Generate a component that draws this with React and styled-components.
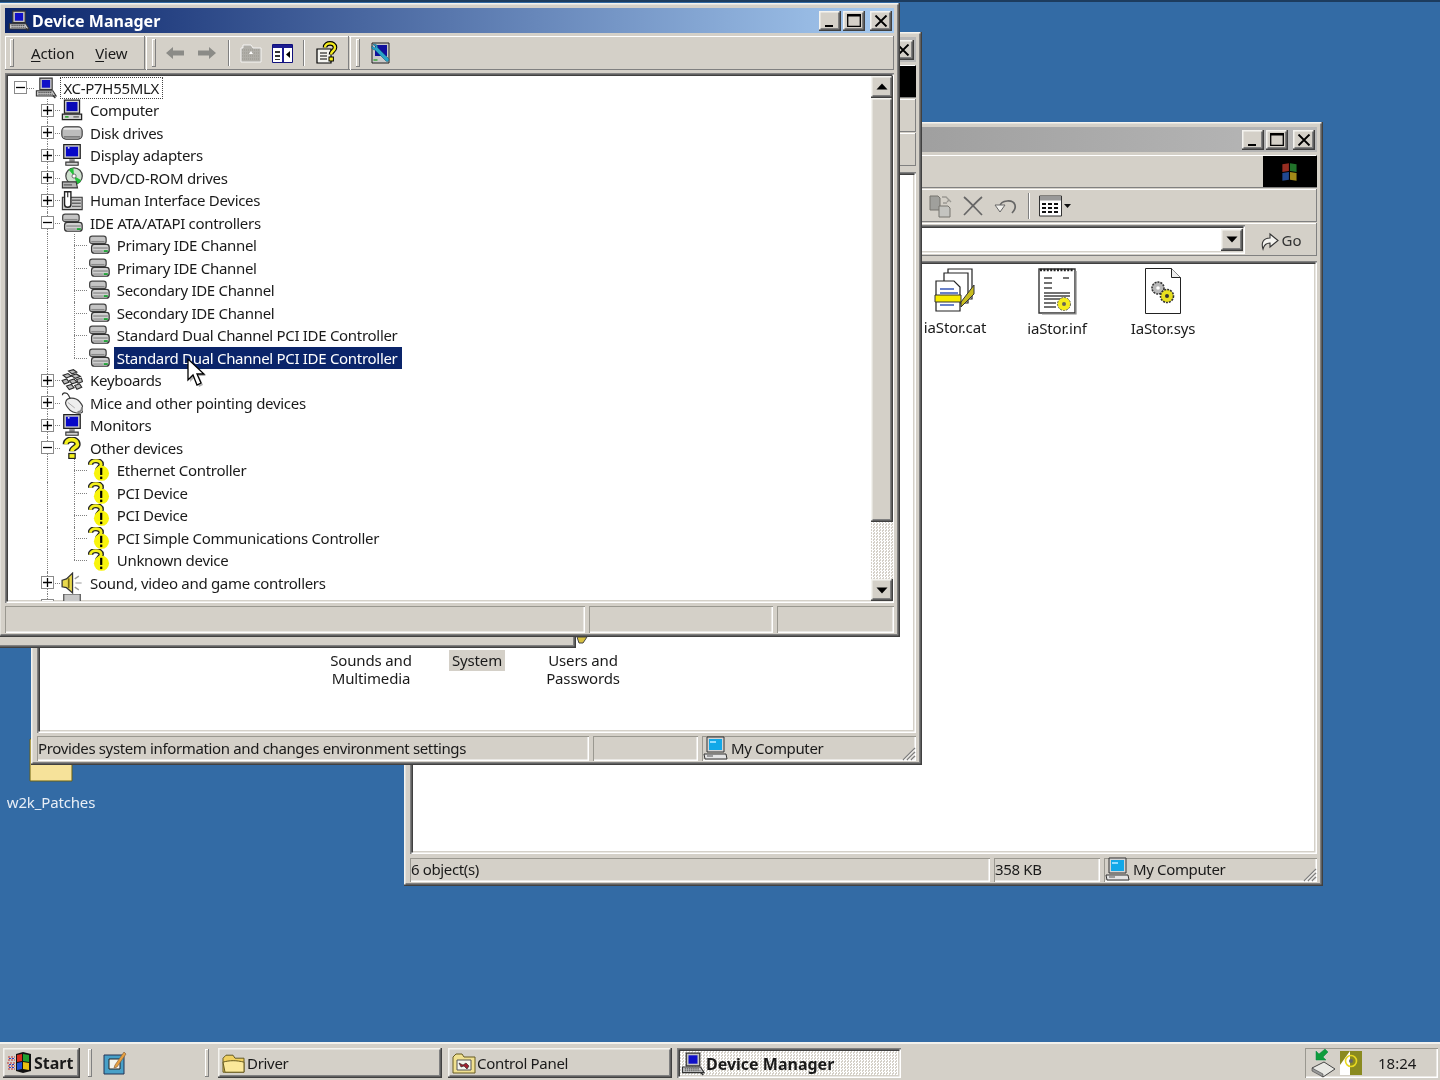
import React from "react";
import styled, { createGlobalStyle, css } from "styled-components";

const Global = createGlobalStyle`
  html, body { margin: 0; padding: 0; background: #336ba5; }
  * { box-sizing: border-box; }
`;

const FACE = "#d4d0c8";

const raised = css`
  box-shadow: inset -1.5px -1.5px #404040, inset 1.5px 1.5px #f4f3ef,
    inset -3px -3px #808080;
`;
const thinRaised = css`
  box-shadow: inset -1px -1px #808080, inset 1px 1px #fff;
`;
const sunken = css`
  box-shadow: inset 1.5px 1.5px #808080, inset -1.5px -1.5px #fff,
    inset 3px 3px #404040, inset -3px -3px ${FACE};
`;
const thinSunken = css`
  box-shadow: inset 1px 1px #9a9890, inset -1.5px -1.5px #fff;
`;

const Screen = styled.div`
  position: relative;
  width: 1440px;
  height: 1080px;
  overflow: hidden;
  background: #336ba5;
  display: flex;
  flex-direction: column;
  justify-content: flex-end;
  font-family: "Noto Sans", "Liberation Sans", sans-serif;
  font-size: 15px;
  color: #1a1a1a;
  filter: blur(0.4px);
`;

const TopEdge = styled.div`
  position: absolute;
  left: 0;
  right: 0;
  top: 0;
  height: 2px;
  background: #1d3c5e;
`;

const Win = styled.div`
  position: absolute;
  left: ${(p) => p.$x}px;
  top: ${(p) => p.$y}px;
  width: ${(p) => p.$w}px;
  height: ${(p) => p.$h}px;
  padding: 5px 6px 4px 6px;
  background: ${FACE};
  display: flex;
  flex-direction: column;
  overflow: hidden;
  ${raised}
`;

const TitleBar = styled.div`
  height: 25px;
  flex: none;
  padding: 0 2px 0 3px;
  display: flex;
  align-items: center;
  gap: 2px;
  color: #fff;
  font-weight: 700;
  font-size: 16px;
  background: ${(p) =>
    p.$active
      ? "linear-gradient(90deg, #0a246a 0%, #a6caf0 100%)"
      : "linear-gradient(90deg, #808080 0%, #b8b8b8 100%)"};
`;

const TitleText = styled.span`
  flex: 1;
`;

const CapButton = styled.div`
  width: 22px;
  height: 20px;
  flex: none;
  margin-left: ${(p) => p.$gap || 0}px;
  background: ${FACE};
  display: flex;
  align-items: center;
  justify-content: center;
  ${raised}
`;

const Band = styled.div`
  flex: none;
  height: ${(p) => p.$h || 34}px;
  margin-top: ${(p) => p.$top ?? 3}px;
  display: flex;
  align-items: center;
  padding: ${(p) => p.$pad || "0 0 0 4px"};
  ${thinRaised}
`;

const Gripper = styled.div`
  width: 4px;
  height: 28px;
  flex: none;
  margin-left: ${(p) => p.$ml || 0}px;
  ${thinRaised}
`;

const BandEdge = styled.div`
  width: 3px;
  align-self: stretch;
  flex: none;
  margin-left: ${(p) => p.$ml || 0}px;
  box-shadow: inset 1px 0 #808080, inset -1px 0 #fff;
`;

const ToolSep = styled.div`
  width: 2px;
  height: 26px;
  flex: none;
  margin-left: ${(p) => p.$ml || 0}px;
  box-shadow: inset 1px 0 #808080, inset -1px 0 #fff;
`;

const MenuItem = styled.span`
  margin-left: ${(p) => p.$ml || 0}px;
  flex: none;
  letter-spacing: -0.2px;
  & u {
    text-underline-offset: 2px;
  }
`;

const ToolIcon = styled.span`
  flex: none;
  display: flex;
  align-items: center;
  margin-left: ${(p) => p.$ml || 0}px;
`;

const TreeFrame = styled.div`
  flex: 1;
  min-height: 0;
  margin-top: 3px;
  padding: 3.5px 1px 2px 2px;
  background: #fff;
  display: flex;
  ${sunken}
`;

const TreePane = styled.div`
  flex: 1;
  overflow: hidden;
  letter-spacing: -0.3px;
`;

const Row = styled.div`
  height: 22.5px;
  display: flex;
  align-items: center;
`;

const Gutter = styled.div`
  position: relative;
  width: 26.7px;
  height: 100%;
  flex: none;
  display: flex;
  align-items: center;
  justify-content: center;
  ${(p) =>
    (p.$kind === "pass" || p.$kind === "branch" || p.$kind === "node") &&
    css`
      &::before {
        content: "";
        position: absolute;
        left: 50%;
        top: 0;
        bottom: 0;
        border-left: 1px dotted #808080;
      }
    `}
  ${(p) =>
    p.$kind === "end" &&
    css`
      &::before {
        content: "";
        position: absolute;
        left: 50%;
        top: 0;
        bottom: 50%;
        border-left: 1px dotted #808080;
      }
    `}
  ${(p) =>
    (p.$kind === "branch" || p.$kind === "end" || p.$kind === "node" || p.$kind === "root") &&
    css`
      &::after {
        content: "";
        position: absolute;
        left: 50%;
        right: 0;
        top: 50%;
        border-top: 1px dotted #808080;
      }
    `}
`;

const Expander = styled.span`
  position: relative;
  z-index: 1;
  width: 13px;
  height: 13px;
  border: 1px solid #8a8a8a;
  background: #fff;
  display: flex;
  align-items: center;
  justify-content: center;
`;

const NodeIcon = styled.span`
  width: 26.7px;
  flex: none;
  display: flex;
  padding-left: 1px;
`;

const NodeLabel = styled.span`
  height: 22px;
  line-height: 20px;
  padding: 0 3px 0 2px;
  white-space: nowrap;
  border: 1px ${(p) => (p.$focus ? "dotted #444" : "solid transparent")};
  ${(p) =>
    p.$selected &&
    css`
      background: #0a246a;
      color: #fff;
      border-color: #0a246a;
    `}
`;

const Scrollbar = styled.div`
  width: 22px;
  flex: none;
  margin-top: -1px;
  display: flex;
  flex-direction: column;
  background: repeating-conic-gradient(#fff 0 25%, ${FACE} 0 50%) 0 0 / 3px 3px;
`;

const ScrollButton = styled.div`
  height: 22px;
  flex: none;
  background: ${FACE};
  display: flex;
  align-items: center;
  justify-content: center;
  ${raised}
`;

const ComboButton = styled(ScrollButton)`
  width: 22px;
`;

const ScrollThumb = styled.div`
  height: ${(p) => p.$h}px;
  flex: none;
  background: ${FACE};
  ${raised}
`;

const ScrollTrack = styled.div`
  flex: 1;
`;

const StatusRow = styled.div`
  flex: none;
  height: ${(p) => p.$h || 27}px;
  margin-top: ${(p) => p.$top ?? 3}px;
  display: flex;
  gap: 4px;
`;

const StatusCell = styled.div`
  width: ${(p) => (p.$w ? `${p.$w}px` : "auto")};
  flex: ${(p) => (p.$w ? "none" : "1")};
  display: flex;
  align-items: center;
  gap: 3px;
  padding: 0 0 2px 1px;
  white-space: nowrap;
  letter-spacing: -0.36px;
  ${thinSunken}
`;

const GripBox = styled.span`
  margin: 0 0 -2px auto;
  display: flex;
  align-self: flex-end;
`;

const Brand = styled.div`
  width: 54px;
  height: 31px;
  flex: none;
  margin-left: auto;
  background: #000;
  display: flex;
  align-items: center;
  justify-content: center;
`;

const AddressBox = styled.div`
  flex: 1;
  height: 29px;
  background: #fff;
  display: flex;
  justify-content: flex-end;
  align-items: center;
  padding-right: 2px;
  ${sunken}
`;

const GoBox = styled.div`
  width: 70px;
  flex: none;
  display: flex;
  align-items: center;
  justify-content: center;
  gap: 1px;
  color: #333;
`;

const Content = styled.div`
  flex: 1;
  min-height: 0;
  margin-top: ${(p) => p.$top || 6}px;
  background: #fff;
  display: flex;
  flex-direction: column;
  justify-content: ${(p) => (p.$bottom ? "flex-end" : "flex-start")};
  padding: ${(p) => p.$pad};
  ${sunken}
`;

const IconRow = styled.div`
  display: flex;
`;

const Item = styled.div`
  width: ${(p) => p.$w || 106}px;
  flex: none;
  display: flex;
  flex-direction: column;
  align-items: center;
  text-align: center;
  line-height: 18px;
  letter-spacing: -0.15px;
`;

const Caption = styled.span`
  margin-top: ${(p) => p.$top || 0}px;
  padding: ${(p) => (p.$hilite ? "1px 3px 2px" : "0")};
  background: ${(p) => (p.$hilite ? FACE : "transparent")};
`;

const UsersTip = styled.svg`
  margin-bottom: 6px;
`;

const DesktopIcon = styled.div`
  position: absolute;
  left: 0;
  top: 738px;
  width: 102px;
  display: flex;
  flex-direction: column;
  align-items: center;
  gap: 10px;
  color: #e8eef6;
  letter-spacing: -0.15px;
`;

const Pointer = styled.svg`
  position: absolute;
  left: 186px;
  top: 358px;
  z-index: 5;
`;

const Taskbar = styled.div`
  height: 38px;
  flex: none;
  position: relative;
  background: ${FACE};
  border-top: 2px solid #f2f1ed;
  padding: 4px 2px 2px 3px;
  display: flex;
  align-items: stretch;
`;

const TaskButton = styled.div`
  width: ${(p) => p.$w}px;
  flex: none;
  margin-left: ${(p) => p.$ml || 0}px;
  display: flex;
  align-items: center;
  gap: 1px;
  padding-left: ${(p) => p.$pl ?? 4}px;
  font-weight: ${(p) => (p.$bold ? 700 : 400)};
  font-size: ${(p) => (p.$bold ? "16px" : "15px")};
  letter-spacing: ${(p) => (p.$bold ? "0" : "-0.3px")};
  white-space: nowrap;
  ${raised}
  ${(p) =>
    p.$pressed &&
    css`
      ${sunken}
      background: repeating-conic-gradient(#fff 0 25%, ${FACE} 0 50%) 0 0 / 3px 3px;
      padding-top: 2px;
    `}
`;

const TaskGrip = styled.div`
  width: 4px;
  flex: none;
  margin: 1px 0 1px ${(p) => p.$ml || 0}px;
  ${thinRaised}
`;

const Tray = styled.div`
  width: 133px;
  margin-left: auto;
  flex: none;
  display: flex;
  align-items: center;
  padding: 0 0 0 5px;
  gap: 1px;
  ${thinSunken}
`;

const Clock = styled.span`
  margin-left: 14px;
`;

/* ---- icons ---- */

const Ico = ({ s = 22, children }) => (
  <svg width={s} height={s} viewBox="0 0 16 16">
    {children}
  </svg>
);

const RootPc = ({ s }) => (
  <Ico s={s}>
    <path d="M3.5 .8h9v8.4h-9z" fill="#c4c4c4" stroke="#333" strokeWidth=".8" />
    <path d="M5 2.2h6v5.6H5z" fill="#1010c8" />
    <path d="M1 10h12l2.4 3.8H1z" fill="#c8c8c8" stroke="#333" strokeWidth=".8" />
    <path d="M2.5 11.2h9.5M2.5 12.5h10.5" stroke="#555" strokeWidth=".8" strokeDasharray="1 .4" />
    <path d="M13 13.5l1.8 1.8" stroke="#333" />
  </Ico>
);
const DesktopPc = ({ s }) => (
  <Ico s={s}>
    <path d="M2.5 .8h11v9.4h-11z" fill="#d0d0d0" stroke="#222" strokeWidth=".9" />
    <path d="M4 2.2h8v6.6H4z" fill="#0808b8" />
    <path d="M1 11h14v4H1z" fill="#d0d0d0" stroke="#222" strokeWidth=".9" />
    <path d="M3 13h2.5" stroke="#18a018" />
    <path d="M9 13h4" stroke="#666" />
  </Ico>
);
const DiskIco = () => (
  <Ico>
    <rect x=".6" y="3.5" width="14.8" height="9" rx="3" fill="#bcbcbc" stroke="#333" strokeWidth=".8" />
    <path d="M2 5h12" stroke="#f0f0f0" strokeWidth="1.1" />
    <path d="M2 10.8h12" stroke="#777" strokeWidth="1.1" />
  </Ico>
);
const MonitorIco = () => (
  <Ico>
    <path d="M2 0.5h12v10H2z" fill="#c8c8c8" stroke="#222" strokeWidth=".9" />
    <path d="M3.6 2h8.8v7H3.6z" fill="#0808c8" />
    <path d="M5 2.8h1.2" stroke="#fff" />
    <path d="M6 11h4v2H6z" fill="#888" />
    <path d="M3.5 13.2h9v2.2h-9z" fill="#d0d0d0" stroke="#333" strokeWidth=".8" />
  </Ico>
);
const DvdIco = () => (
  <Ico>
    <circle cx="9.5" cy="6.6" r="6" fill="#cfe0cf" stroke="#444" strokeWidth=".9" />
    <path d="M9.5 6.6L5.6 2A6 6 0 0 1 9 .7zM9.5 6.6l5.2 3a6 6 0 0 1-3.2 2.8z" fill="#22c038" />
    <circle cx="9.5" cy="6.6" r="1.5" fill="#fff" stroke="#555" strokeWidth=".6" />
    <path d="M1 10.8h10l1 4.4H1z" fill="#b4b4b4" stroke="#333" strokeWidth=".8" />
    <path d="M2 13h6" stroke="#666" />
  </Ico>
);
const HidIco = () => (
  <Ico>
    <path d="M1 6h14.4v9H1z" fill="#c8c8c8" stroke="#333" strokeWidth=".8" />
    <path d="M8 8.2h6.4M8 10.4h6.4M8 12.6h6.4" stroke="#666" strokeWidth="1" />
    <path d="M2.6 2h4.6v9a2.3 2.3 0 0 1-4.6 0z" fill="#fff" stroke="#222" strokeWidth="1" />
    <path d="M4.9 2v4" stroke="#222" strokeWidth=".8" />
  </Ico>
);
const IdeIco = () => (
  <Ico>
    <rect x="1.2" y="1.6" width="12" height="5.4" rx="1.8" fill="#c4c4c4" stroke="#444" strokeWidth=".9" />
    <path d="M2.4 5.6h9.6" stroke="#8a8a8a" strokeWidth="1.1" />
    <rect x="2.6" y="7.6" width="12.8" height="6.4" rx="2" fill="#d0d0d0" stroke="#333" strokeWidth=".9" />
    <path d="M3.8 10.2h10.6" stroke="#888" strokeWidth=".9" />
    <path d="M3.8 12.4h7" stroke="#9a9a9a" />
    <path d="M11.4 12.4h3" stroke="#18a030" strokeWidth="1.3" />
  </Ico>
);
const KeyboardIco = () => (
  <Ico>
    <g fill="#bcbcbc" stroke="#2a2a2a" strokeWidth=".8">
      <path d="M5.5 1.5l3.5-1 2.5 1.8-3.5 1.2z" />
      <path d="M1.5 4.5l3.6-1.2 2.4 1.8-3.6 1.4z" />
      <path d="M7.5 4.8l3.6-1.2 3 1.8-3.6 1.4z" />
      <path d="M.8 8.4l3.4-1.2 1.6 2.4-3.4 1.4z" />
      <path d="M6 8.4l3.5-1.2 2 2.4-3.5 1.2z" />
      <path d="M11.4 7.6l3.4-1 .8 2.6-3.2 1.2z" />
      <path d="M4 12.4l3.5-1.2 2 2.4-3.5 1.4z" />
      <path d="M10 12l3.5-1.2 1.6 2.4-3.5 1.6z" />
    </g>
  </Ico>
);
const MouseIco = () => (
  <Ico>
    <path d="M1 2.4c0-2.4 3.5-2.4 4.5 0s1 2 2 3" fill="none" stroke="#333" strokeWidth=".8" />
    <path d="M3.5 7c1-3.4 7-3.4 10 0s3.2 6.4 2 7.6-6.6 1-8.8-1.2S2.6 9.2 3.5 7z" fill="#eee" stroke="#444" strokeWidth=".9" />
    <path d="M12 14.6c2.4 0 3.4-1.4 3.2-3.6" fill="none" stroke="#888" strokeWidth="1.4" />
    <path d="M5 7.6l5 4" stroke="#aaa" strokeWidth=".7" />
  </Ico>
);
const QuestionIco = () => (
  <Ico>
    <path d="M3.5 5.2C3.5 .8 12 .8 12 5.2 12 7.8 8 7.6 8 10.4" fill="none" stroke="#222" strokeWidth="4.6" />
    <path d="M3.5 5.2C3.5 .8 12 .8 12 5.2 12 7.8 8 7.6 8 10.4" fill="none" stroke="#f4f01c" strokeWidth="2.6" />
    <rect x="5.7" y="12" width="4.6" height="3.6" fill="#f4f01c" stroke="#222" strokeWidth=".9" />
  </Ico>
);
const WarnIco = () => (
  <Ico>
    <path d="M1.8 4.2C1.8 .2 9.6 .2 9.6 4 9.6 5.6 7.4 6.4 7 8.4" fill="none" stroke="#222" strokeWidth="4" />
    <path d="M1.8 4.2C1.8 .2 9.6 .2 9.6 4 9.6 5.6 7.4 6.4 7 8.4" fill="none" stroke="#f4f01c" strokeWidth="2.1" />
    <circle cx="9.8" cy="10.4" r="5.5" fill="#f8f40c" />
    <path d="M9.6 6.4v5.2" stroke="#000" strokeWidth="1.6" />
    <path d="M9.6 12.8v1.8" stroke="#000" strokeWidth="1.6" />
  </Ico>
);
const SoundIco = () => (
  <Ico>
    <path d="M.8 6l3.2-1L8.4.8v14.4L4 11.4.8 10.8z" fill="#e8d84c" stroke="#333" strokeWidth=".9" />
    <path d="M5.6 4.6v7" stroke="#7a6a10" strokeWidth="1.2" />
    <path d="M10 5l3-2M10.5 8h4.5M10 11l3 2" stroke="#999" strokeWidth=".9" />
  </Ico>
);
const StorageIco = () => (
  <Ico>
    <path d="M2 0h12v16H2z" fill="#c8c8c8" stroke="#444" strokeWidth=".8" />
  </Ico>
);

const Chevron = ({ up }) => (
  <svg width="12" height="7" viewBox="0 0 12 7">
    <path d={up ? "M6 .5L11.5 6.5H.5z" : "M6 6.5L11.5 .5H.5z"} fill="#000" />
  </svg>
);
const CapMin = () => (
  <svg width="12" height="12" viewBox="0 0 12 12">
    <path d="M1 10h8v2H1z" fill="#000" />
  </svg>
);
const CapMax = () => (
  <svg width="14" height="13" viewBox="0 0 14 13">
    <path d="M.7.7h12.6v11.6H.7z" fill="none" stroke="#000" strokeWidth="1.3" />
    <path d="M0 1.5h14" stroke="#000" strokeWidth="2" />
  </svg>
);
const CapClose = () => (
  <svg width="14" height="12" viewBox="0 0 14 12">
    <path d="M1.5.5l11 11M12.5.5l-11 11" stroke="#000" strokeWidth="1.9" />
  </svg>
);
const SizeGrip = () => (
  <svg width="16" height="16" viewBox="0 0 16 16">
    <path d="M15 3L3 15M15 7l-8 8M15 11l-4 4" stroke="#808080" strokeWidth="1.3" fill="none" />
    <path d="M15 4.5L4.5 15M15 8.5L8.5 15M15 12.5L12.5 15" stroke="#fff" strokeWidth="1" fill="none" />
  </svg>
);

const Arrow = ({ left }) => (
  <svg width="20" height="16" viewBox="0 0 20 16">
    <path d={left ? "M1 8l7-6v3.5h11v5H8V14z" : "M19 8l-7-6v3.5H1v5h11V14z"} fill="#8b8b87" />
  </svg>
);
const FolderUp = () => (
  <svg width="22" height="20" viewBox="0 0 22 20">
    <path d="M1 5h2V2h8l2 3h8v14H1z" fill="#b0aea8" stroke="#fff" strokeWidth=".8" />
    <path d="M2 7h18M2 10h18M2 13h18M2 16h18" stroke="#99978f" strokeDasharray="1 1" />
    <path d="M11 8l-2 3h4z" fill="#fff" />
  </svg>
);
const DetailsIco = () => (
  <svg width="21" height="19" viewBox="0 0 21 19">
    <path d="M.5.5h20v18H.5z" fill="#fff" stroke="#10107c" />
    <path d="M1 1h19v3H1z" fill="#1c1c90" />
    <path d="M10 4h2v14h-2z" fill="#1c1c90" />
    <path d="M3 7h5v2H3zM3 11h5v2H3zM3 15h5v1H3z" fill="#333" />
    <path d="M18 7v7l-4-3.5z" fill="#000" />
  </svg>
);
const HelpIco = () => (
  <svg width="24" height="24" viewBox="0 0 24 24">
    <path d="M2 8h14v14H2z" fill="#f4f4f0" stroke="#000" strokeWidth="1.2" />
    <path d="M5 12h7M5 15h7M5 18h7" stroke="#000" strokeWidth="1.2" />
    <path d="M10 6.5C10 1 20 1 20 6.5c0 3.5-4 3.5-4 7" fill="none" stroke="#000" strokeWidth="4.6" />
    <path d="M10 6.5C10 1 20 1 20 6.5c0 3.5-4 3.5-4 7" fill="none" stroke="#f4ec1c" strokeWidth="2.4" />
    <rect x="14" y="16" width="4.4" height="4" fill="#f4ec1c" stroke="#000" />
  </svg>
);
const ScanIco = () => (
  <svg width="22" height="22" viewBox="0 0 22 22">
    <path d="M2 1h17v20H2z" fill="#c8c8c8" stroke="#222" />
    <path d="M5 3h12v11H5z" fill="#10109c" />
    <path d="M3 2.5c3-1 5 1 4.5 3l11 11c1.5 1.5-1 4-2.5 2.5l-11-11C3 8 1 6 2 4l2.5 2L6 4.5z" fill="#28a4c8" stroke="#15607c" strokeWidth=".6" />
    <path d="M3.5 18h4" stroke="#18a018" strokeWidth="1.2" />
  </svg>
);
const MoveIco = () => (
  <svg width="24" height="24" viewBox="0 0 24 24">
    <path d="M1 2h8l2 2v12H1z" fill="#a0a09c" stroke="#77756f" />
    <path d="M10 12h9l2 2v9H10z" fill="#c4c4c0" stroke="#77756f" />
    <path d="M13 3h4l3 3M18 8l2-2 2 2M14 9l4 0" stroke="#9a9892" fill="none" strokeWidth="1.4" />
  </svg>
);
const DeleteIco = () => (
  <svg width="22" height="22" viewBox="0 0 22 22">
    <path d="M2 2c6 5 12 12 18 18M20 2C14 7 8 14 2 20" stroke="#666" strokeWidth="1.7" fill="none" />
  </svg>
);
const UndoIco = () => (
  <svg width="24" height="20" viewBox="0 0 24 20">
    <path d="M6 10c1-6 13-7 15-1 1 3.5-1 6-3 8" fill="none" stroke="#666" strokeWidth="1.7" />
    <path d="M1 9h10l-5 7z" fill="#f0efeb" stroke="#666" />
  </svg>
);
const ViewsIco = () => (
  <svg width="32" height="22" viewBox="0 0 32 22">
    <path d="M.5 1h22v20H.5z" fill="#fff" stroke="#333" />
    <path d="M1 1.5h21v4H1z" fill="#999" />
    <path d="M3 8h4v2H3zM9 8h4v2H9zM15 8h4v2h-4zM3 12h4v2H3zM9 12h4v2H9zM15 12h4v2h-4zM3 16h4v2H3zM9 16h4v2H9zM15 16h4v2h-4z" fill="#111" />
    <path d="M25 9h7l-3.5 4z" fill="#111" />
  </svg>
);
const GoIco = () => (
  <svg width="22" height="22" viewBox="0 0 22 22">
    <path d="M4 20c-2-6 0-11 7-11V5l8 6.5-8 6.5v-4c-4 0-6 2-7 6z" fill="#f4f3ef" stroke="#333" strokeWidth="1.1" />
  </svg>
);
const MyComputer = () => (
  <svg width="25" height="24" viewBox="0 0 25 24">
    <path d="M4 1h17v15H4z" fill="#d4d4d4" stroke="#333" />
    <path d="M6 3h13v11H6z" fill="#12a8e8" />
    <path d="M1 18h22l1 5H2z" fill="#e4e4e4" stroke="#333" />
    <path d="M4 20h6" stroke="#555" />
    <path d="M7 5h6v2H7z" fill="#90dcff" />
  </svg>
);
const CatIco = () => (
  <svg width="42" height="46" viewBox="0 0 42 46">
    <path d="M14 2h24v30H14z" fill="#fff" stroke="#222" strokeWidth="1.2" />
    <path d="M10 6h24v30H10z" fill="#fff" stroke="#222" strokeWidth="1.2" />
    <path d="M2 14h18l6 6v24H2z" fill="#fff" stroke="#222" strokeWidth="1.2" />
    <path d="M6 22h14M6 26h18M6 38h14" stroke="#3858b8" strokeWidth="1.4" />
    <path d="M1 28h26v7H1z" fill="#f8ec00" stroke="#333" />
    <path d="M27 35L40 18l0 9-13 13z" fill="#c8bc20" stroke="#333" />
  </svg>
);
const InfIco = () => (
  <svg width="40" height="48" viewBox="0 0 40 48">
    <path d="M2 2h36v44H2z" fill="#fff" stroke="#333" strokeWidth="1.4" />
    <path d="M3 3h34" stroke="#222" strokeWidth="2.4" strokeDasharray="2 1.4" />
    <path d="M7 11h8M7 16h8M7 21h8M7 26h26M7 29h26M7 32h18M7 36h12M7 40h12M26 11h6" stroke="#444" strokeWidth="1.4" />
    <circle cx="27" cy="37" r="6.5" fill="#f4ec1c" stroke="#665" strokeDasharray="2 1" />
    <circle cx="27" cy="37" r="2" fill="#665" />
    <path d="M39 4v43H5" fill="none" stroke="#888" strokeWidth="1.2" />
  </svg>
);
const SysIco = () => (
  <svg width="38" height="48" viewBox="0 0 38 48">
    <path d="M1.5 1.5h26l9 9v36h-35z" fill="#fff" stroke="#222" />
    <path d="M27.5 1.5v9h9" fill="#eee" stroke="#222" />
    <circle cx="14" cy="21" r="6" fill="#b8b8b8" stroke="#333" strokeWidth="1.6" strokeDasharray="2 1" />
    <circle cx="14" cy="21" r="1.8" fill="#fff" />
    <circle cx="23" cy="29" r="6.5" fill="#e8e020" stroke="#333" strokeWidth="1.6" strokeDasharray="2 1" />
    <circle cx="23" cy="29" r="2" fill="#333" />
  </svg>
);
const Flag = ({ s = 24 }) => (
  <svg width={s} height={s} viewBox="0 0 22 22" opacity=".75">
    <path d="M4 4l6-1v7l-6 1z" fill="#c83c2c" />
    <path d="M11 3l6 1v7l-6-1z" fill="#2c9838" />
    <path d="M4 12l6-1v7l-6 1z" fill="#2c60c0" />
    <path d="M11 11l6 1v7l-6-1z" fill="#d8b820" />
  </svg>
);
const StartFlag = () => (
  <svg width="26" height="24" viewBox="0 0 26 24">
    <path d="M9 3l7-2 8 2v17l-8 2-7-2z" fill="#111" />
    <path d="M10 4l5-1v7l-5 1z" fill="#d83020" />
    <path d="M16 3l6 1v7l-6-1z" fill="#20a030" />
    <path d="M10 12l5-1v7l-5 1z" fill="#2050d0" />
    <path d="M16 11l6 1v7l-6-1z" fill="#e8c010" />
    <path d="M1 6h7M1 9h7M0 12h8M1 15h7M1 18h7" stroke="#c03030" strokeWidth="1" strokeDasharray="2 1" />
    <path d="M2 7.5h6M2 13.5h6M2 16.5h6" stroke="#3040c0" strokeWidth="1" strokeDasharray="2 1" />
  </svg>
);
const NotepadIco = () => (
  <svg width="24" height="24" viewBox="0 0 24 24">
    <path d="M1 4h20v19H1z" fill="#48a0c8" stroke="#235" />
    <path d="M6 8h11v10H6z" fill="#f4f4ee" stroke="#222" />
    <path d="M12 14L21 1l2 2-9 13-3 1z" fill="#e8a040" stroke="#864" strokeWidth=".7" />
  </svg>
);
const FolderIco = ({ s = 24 }) => (
  <svg width={s} height={s * 0.85} viewBox="0 0 24 20">
    <path d="M1 5l3-3h7l2 3h9v14H1z" fill="#f0d060" stroke="#665a20" />
    <path d="M1 9c6-2 14-2 21 0v10H3z" fill="#fbe89a" stroke="#665a20" />
  </svg>
);
const CpFolderIco = () => (
  <svg width="24" height="22" viewBox="0 0 24 22">
    <path d="M1 5l3-3h6l2 3h11v16H1z" fill="#f0e090" stroke="#665a20" />
    <path d="M5 8h14v10H5z" fill="#f4f4ee" stroke="#555" />
    <path d="M7 11l4 2 3-2 3 3-2 3-3-3-3 1z" fill="#a02030" stroke="#222" strokeWidth=".6" />
  </svg>
);
const BigFolder = () => (
  <svg width="44" height="44" viewBox="0 0 44 44">
    <path d="M1 1h42v42H1z" fill="#f8e088" stroke="#66601c" />
    <path d="M2 26h40v16H2z" fill="#f6e29a" />
  </svg>
);
const TrayNet = () => (
  <svg width="28" height="30" viewBox="0 0 28 30">
    <path d="M15 1l3 3-5 5 3 3H6V3l3 3z" fill="#0f9c3c" stroke="#084" strokeWidth=".5" />
    <path d="M2 20l12-6 11 7-12 8z" fill="#e8e8e4" stroke="#444" />
    <path d="M2 20v3l11 6v-3z" fill="#999" stroke="#444" strokeWidth=".6" />
  </svg>
);
const TrayCard = () => (
  <svg width="24" height="26" viewBox="0 0 24 26">
    <path d="M1 1h22v24H1z" fill="#8a8a20" />
    <path d="M1 15L11 1v24H1z" fill="#fff" />
    <circle cx="12" cy="11" r="5.5" fill="none" stroke="#e8d820" strokeWidth="1.6" />
    <circle cx="12" cy="11" r="2" fill="#666" />
  </svg>
);

const Plus = ({ open }) => (
  <svg width="9" height="9" viewBox="0 0 9 9">
    <path d={open ? "M0 4.5h9" : "M0 4.5h9M4.5 0v9"} stroke="#000" strokeWidth="1.3" />
  </svg>
);

const TREE = [
  { level: 0, label: "XC-P7H55MLX", icon: RootPc, open: true, focus: true },
  { level: 1, label: "Computer", icon: DesktopPc },
  { level: 1, label: "Disk drives", icon: DiskIco },
  { level: 1, label: "Display adapters", icon: MonitorIco },
  { level: 1, label: "DVD/CD-ROM drives", icon: DvdIco },
  { level: 1, label: "Human Interface Devices", icon: HidIco },
  { level: 1, label: "IDE ATA/ATAPI controllers", icon: IdeIco, open: true },
  { level: 2, label: "Primary IDE Channel", icon: IdeIco },
  { level: 2, label: "Primary IDE Channel", icon: IdeIco },
  { level: 2, label: "Secondary IDE Channel", icon: IdeIco },
  { level: 2, label: "Secondary IDE Channel", icon: IdeIco },
  { level: 2, label: "Standard Dual Channel PCI IDE Controller", icon: IdeIco },
  { level: 2, label: "Standard Dual Channel PCI IDE Controller", icon: IdeIco, last: true, selected: true },
  { level: 1, label: "Keyboards", icon: KeyboardIco },
  { level: 1, label: "Mice and other pointing devices", icon: MouseIco },
  { level: 1, label: "Monitors", icon: MonitorIco },
  { level: 1, label: "Other devices", icon: QuestionIco, open: true },
  { level: 2, label: "Ethernet Controller", icon: WarnIco },
  { level: 2, label: "PCI Device", icon: WarnIco },
  { level: 2, label: "PCI Device", icon: WarnIco },
  { level: 2, label: "PCI Simple Communications Controller", icon: WarnIco },
  { level: 2, label: "Unknown device", icon: WarnIco, last: true },
  { level: 1, label: "Sound, video and game controllers", icon: SoundIco },
  { level: 1, icon: StorageIco },
];

function TreeRow({ node }) {
  const Icon = node.icon;
  const box = (
    <Expander>
      <Plus open={node.open} />
    </Expander>
  );
  return (
    <Row>
      {node.level === 0 && <Gutter $kind="root">{box}</Gutter>}
      {node.level > 0 && <Gutter />}
      {node.level === 1 && <Gutter $kind="node">{box}</Gutter>}
      {node.level === 2 && <Gutter $kind="pass" />}
      {node.level === 2 && <Gutter $kind={node.last ? "end" : "branch"} />}
      <NodeIcon>
        <Icon />
      </NodeIcon>
      <NodeLabel $focus={node.focus} $selected={node.selected}>
        {node.label}
      </NodeLabel>
    </Row>
  );
}

function CaptionButtons({ gap }) {
  return (
    <>
      <CapButton>
        <CapMin />
      </CapButton>
      <CapButton>
        <CapMax />
      </CapButton>
      <CapButton $gap={gap}>
        <CapClose />
      </CapButton>
    </>
  );
}

// title and menu text of the two folder windows lies under Device Manager
function ExplorerChrome({ toolPad, children }) {
  return (
    <>
      <TitleBar>
        <TitleText />
        <CaptionButtons gap={3} />
      </TitleBar>
      <Band $h={33} $pad="0 0 0 4px">
        <Gripper />
        <Brand>
          <Flag />
        </Brand>
      </Band>
      <Band $h={33} $top={1} $pad={`0 0 0 ${toolPad}px`}>
        <ToolIcon>
          <MoveIco />
        </ToolIcon>
        <ToolIcon $ml={9}>
          <DeleteIco />
        </ToolIcon>
        <ToolIcon $ml={10}>
          <UndoIco />
        </ToolIcon>
        <ToolSep $ml={10} />
        <ToolIcon $ml={9}>
          <ViewsIco />
        </ToolIcon>
      </Band>
      <Band $h={33} $top={1} $pad="0 2px 0 4px">
        <Gripper />
        <AddressBox>
          <ComboButton>
            <Chevron />
          </ComboButton>
        </AddressBox>
        <GoBox>
          <GoIco />
          Go
        </GoBox>
      </Band>
      {children}
    </>
  );
}

export default function App() {
  return (
    <Screen>
      <Global />
      <TopEdge />

      <DesktopIcon>
        <BigFolder />
        <span>w2k_Patches</span>
      </DesktopIcon>

      {/* Driver folder */}
      <Win $x={404} $y={122} $w={919} $h={764}>
        <ExplorerChrome toolPad={519}>
          <Content $top={5} $pad="6px 0 0 496px">
            <IconRow>
              <Item $w={98}>
                <CatIco />
                <Caption $top={5}>iaStor.cat</Caption>
              </Item>
              <Item>
                <InfIco />
                <Caption $top={4}>iaStor.inf</Caption>
              </Item>
              <Item>
                <SysIco />
                <Caption $top={4}>IaStor.sys</Caption>
              </Item>
            </IconRow>
          </Content>
          <StatusRow $h={24} $top={4}>
            <StatusCell $w={580}>6 object(s)</StatusCell>
            <StatusCell $w={106}>358 KB</StatusCell>
            <StatusCell>
              <MyComputer />
              My Computer
              <GripBox>
                <SizeGrip />
              </GripBox>
            </StatusCell>
          </StatusRow>
        </ExplorerChrome>
      </Win>

      {/* Control Panel */}
      <Win $x={31} $y={32} $w={891} $h={733}>
        <ExplorerChrome toolPad={500}>
          <Content $top={6} $bottom $pad="0 0 46px 281px">
            <IconRow>
              <Item>
                <Caption $top={14}>
                  Sounds and
                  <br />
                  Multimedia
                </Caption>
              </Item>
              <Item>
                <Caption $top={13} $hilite>
                  System
                </Caption>
              </Item>
              <Item>
                <UsersTip width="16" height="8" viewBox="0 0 16 8">
                  <path d="M2 0h10L8 6H4z" fill="#d8c040" stroke="#444" />
                </UsersTip>
                <Caption>
                  Users and
                  <br />
                  Passwords
                </Caption>
              </Item>
            </IconRow>
          </Content>
          <StatusRow $h={25} $top={3}>
            <StatusCell $w={552}>Provides system information and changes environment settings</StatusCell>
            <StatusCell $w={105} />
            <StatusCell>
              <MyComputer />
              My Computer
              <GripBox>
                <SizeGrip />
              </GripBox>
            </StatusCell>
          </StatusRow>
        </ExplorerChrome>
      </Win>

      {/* window underneath Device Manager */}
      <Win $x={-3} $y={400} $w={579} $h={248} />

      {/* Device Manager */}
      <Win $x={-1} $y={3} $w={901} $h={634}>
        <TitleBar $active>
          <RootPc s={22} />
          <TitleText>Device Manager</TitleText>
          <CaptionButtons gap={3} />
        </TitleBar>
        <Band $pad="0 0 0 5px">
          <Gripper />
          <MenuItem $ml={17}>
            <u>A</u>ction
          </MenuItem>
          <MenuItem $ml={21}>
            <u>V</u>iew
          </MenuItem>
          <BandEdge $ml={17} />
          <Gripper $ml={5} />
          <ToolIcon $ml={9}>
            <Arrow left />
          </ToolIcon>
          <ToolIcon $ml={12}>
            <Arrow />
          </ToolIcon>
          <ToolSep $ml={11} />
          <ToolIcon $ml={10}>
            <FolderUp />
          </ToolIcon>
          <ToolIcon $ml={10}>
            <DetailsIco />
          </ToolIcon>
          <ToolSep $ml={10} />
          <ToolIcon $ml={10}>
            <HelpIco />
          </ToolIcon>
          <BandEdge $ml={9} />
          <Gripper $ml={5} />
          <ToolIcon $ml={10}>
            <ScanIco />
          </ToolIcon>
        </Band>
        <TreeFrame>
          <TreePane>
            {TREE.map((node, i) => (
              <TreeRow key={i} node={node} />
            ))}
          </TreePane>
          <Scrollbar>
            <ScrollButton>
              <Chevron up />
            </ScrollButton>
            <ScrollThumb $h={424} />
            <ScrollTrack />
            <ScrollButton>
              <Chevron />
            </ScrollButton>
          </Scrollbar>
        </TreeFrame>
        <StatusRow>
          <StatusCell $w={580} />
          <StatusCell $w={184} />
          <StatusCell />
        </StatusRow>
      </Win>

      <Pointer width="22" height="32" viewBox="0 0 22 32">
        <path d="M4 4l0 20 5-5 4 10 4-2-4-9 7 0z" fill="#000" opacity=".3" />
        <path d="M2 1v21l5-5 4 10 4-2-4-9h7z" fill="#fff" stroke="#000" strokeWidth="1.3" />
      </Pointer>

      <Taskbar>
        <TaskButton $w={77} $bold>
          <StartFlag />
          Start
        </TaskButton>
        <TaskGrip $ml={8} />
        <ToolIcon $ml={11}>
          <NotepadIco />
        </ToolIcon>
        <TaskGrip $ml={78} />
        <TaskButton $w={224} $ml={9}>
          <FolderIco />
          Driver
        </TaskButton>
        <TaskButton $w={224} $ml={6}>
          <CpFolderIco />
          Control Panel
        </TaskButton>
        <TaskButton $w={224} $ml={5} $pressed $bold>
          <RootPc s={24} />
          Device Manager
        </TaskButton>
        <Tray>
          <TrayNet />
          <TrayCard />
          <Clock>18:24</Clock>
        </Tray>
      </Taskbar>
    </Screen>
  );
}
